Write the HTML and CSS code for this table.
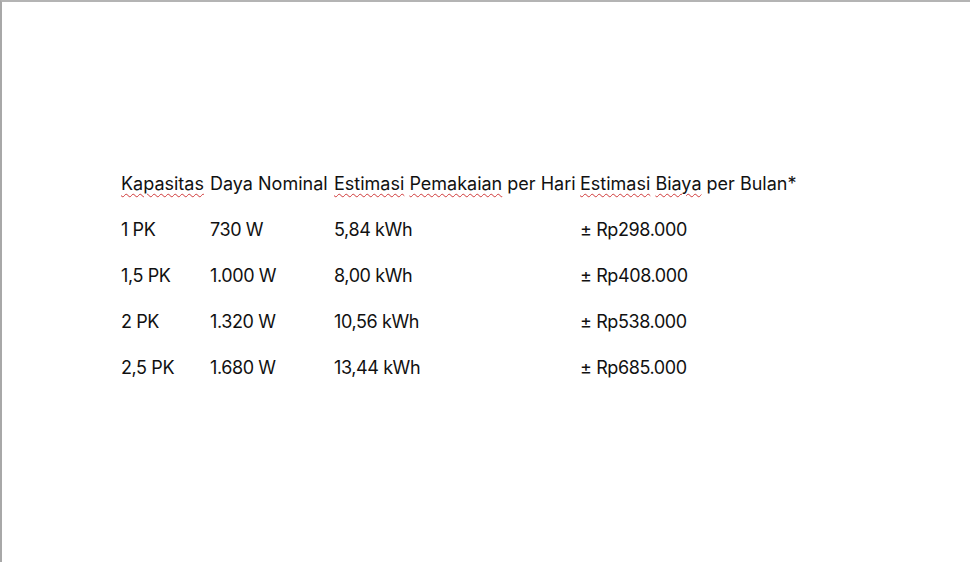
FILE: index.html
```html
<!DOCTYPE html>
<html lang="id">
<head>
<meta charset="utf-8">
<title>Estimasi Biaya AC</title>
<link rel="stylesheet" href="styles.css">
</head>
<body>
<div class="page">
  <div class="table">
    <div class="row head">
      <div class="cell c1"><span class="sp">Kapasitas</span></div>
      <div class="cell c2">Daya Nominal</div>
      <div class="cell c3"><span class="sp">Estimasi</span> <span class="sp">Pemakaian</span> per Hari</div>
      <div class="cell c4"><span class="sp">Estimasi</span> <span class="sp">Biaya</span> per Bulan*</div>
    </div>
    <div class="row data">
      <div class="cell c1">1 PK</div>
      <div class="cell c2">730 W</div>
      <div class="cell c3">5,84 kWh</div>
      <div class="cell c4">± Rp298.000</div>
    </div>
    <div class="row data">
      <div class="cell c1">1,5 PK</div>
      <div class="cell c2">1.000 W</div>
      <div class="cell c3">8,00 kWh</div>
      <div class="cell c4">± Rp408.000</div>
    </div>
    <div class="row data">
      <div class="cell c1">2 PK</div>
      <div class="cell c2">1.320 W</div>
      <div class="cell c3">10,56 kWh</div>
      <div class="cell c4">± Rp538.000</div>
    </div>
    <div class="row data">
      <div class="cell c1">2,5 PK</div>
      <div class="cell c2">1.680 W</div>
      <div class="cell c3">13,44 kWh</div>
      <div class="cell c4">± Rp685.000</div>
    </div>
  </div>
</div>
</body>
</html>
```
FILE: styles.css
```css
html, body {
  margin: 0;
  padding: 0;
  background: #ffffff;
}
.page {
  box-sizing: border-box;
  width: 970px;
  height: 562px;
  border-top: 2px solid #b4b4b4;
  border-left: 2px solid #a8a8a8;
  background: #ffffff;
  padding: 159px 0 0 119px;
  font-family: "Inter", "Liberation Sans", sans-serif;
  font-size: 18px;
  color: #111111;
}
.table {
  display: flex;
  flex-direction: column;
}
.row {
  display: grid;
  grid-template-columns: 89px 124px 246px auto;
  height: 46px;
  align-items: center;
  white-space: nowrap;
}
.cell {
  line-height: 24px;
}
.data {
  letter-spacing: -0.4px;
}
.sp {
  text-decoration: underline wavy #d03a3a;
  text-decoration-thickness: 1px;
  text-underline-offset: 3px;
}
```
